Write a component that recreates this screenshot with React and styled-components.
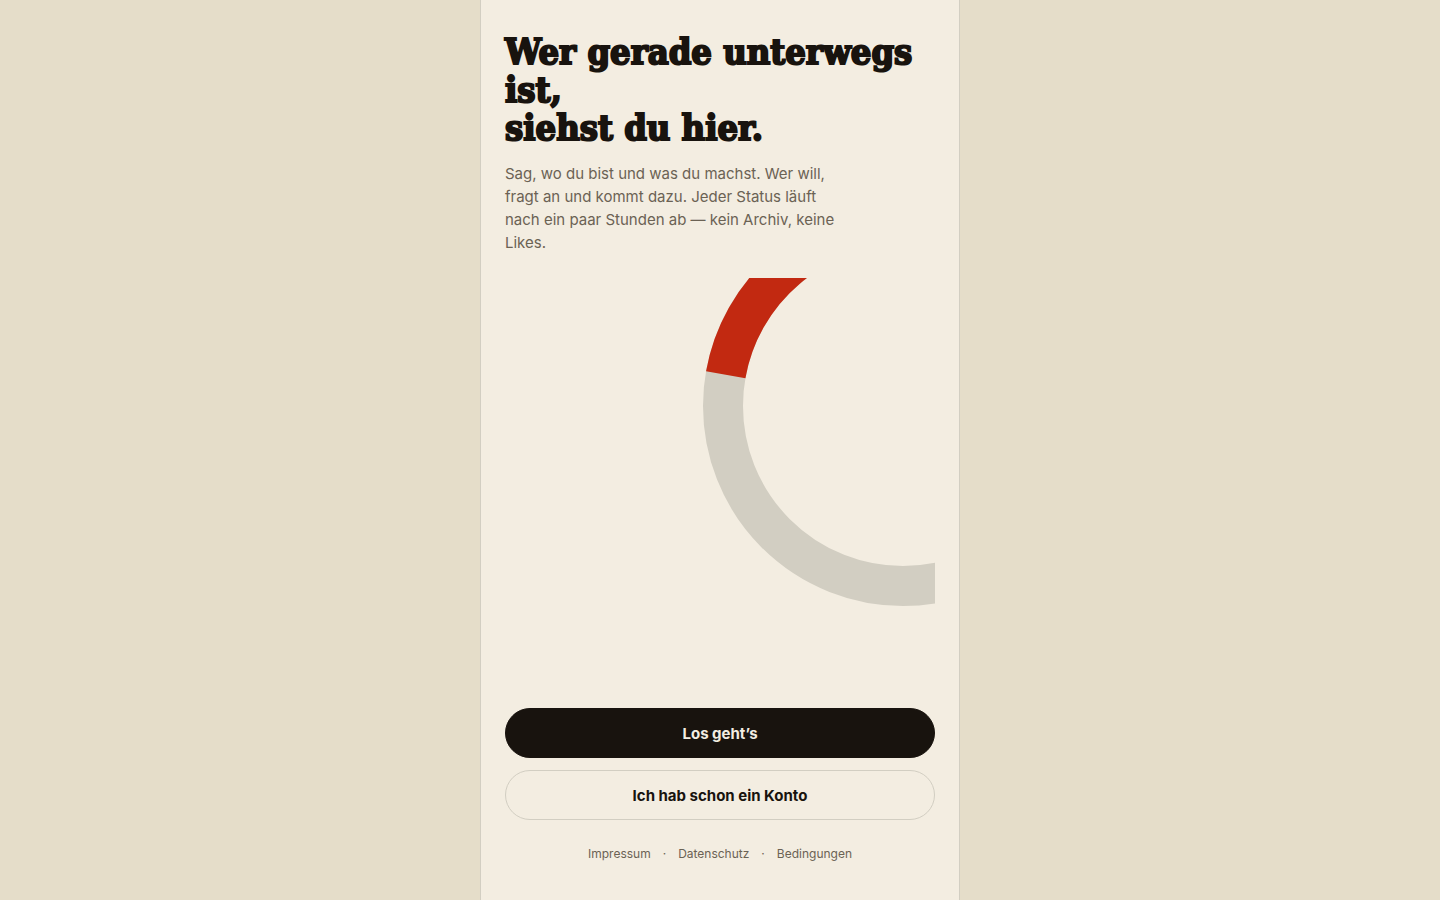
import React from "react"
import styled, { createGlobalStyle, ThemeProvider } from "styled-components"

const theme = {
  backdrop: '#e5ddc9',
  paper: '#f3ede1',
  ink: '#18130e',
  muted: '#6b6254',
  line: '#d2cec2',
  accent: '#c22911',
  display: '"DejaVu Serif Condensed", "DejaVu Serif", serif',
  text: 'Inter, "Open Sans", sans-serif',
}

const RADIUS = 180
const CENTER = 200
const links = ['Impressum', 'Datenschutz', 'Bedingungen']

// degrees run clockwise from twelve o'clock
const pointAt = deg => {
  const rad = (deg - 90) * Math.PI / 180
  return `${CENTER + RADIUS * Math.cos(rad)} ${CENTER + RADIUS * Math.sin(rad)}`
}

const StatusRing = () => (
  <Ring viewBox="0 72 232 328" aria-hidden="true">
    <Track cx={CENTER} cy={CENTER} r={RADIUS} />
    <Remaining d={`M ${pointAt(280)} A ${RADIUS} ${RADIUS} 0 0 1 ${pointAt(360)}`} />
  </Ring>
)

class App extends React.Component {
  render() {
    return (<ThemeProvider theme={theme}>
      <GlobalStyle />
      <Screen>
        <Title>
          Wer gerade unterwegs ist,<br />
          siehst du hier.
        </Title>
        <Intro>
          Sag, wo du bist und was du machst. Wer will, fragt an und kommt
          dazu. Jeder Status läuft nach ein paar Stunden ab — kein Archiv,
          keine Likes.
        </Intro>
        <Stage>
          <StatusRing />
        </Stage>
        <Actions>
          <Button type="button" $primary>Los geht’s</Button>
          <Button type="button">Ich hab schon ein Konto</Button>
        </Actions>
        <Footer>
          {links.map((label, i) => (
            <React.Fragment key={label}>
              {i > 0 && <span>·</span>}
              <FooterLink href={`#${label.toLowerCase()}`}>{label}</FooterLink>
            </React.Fragment>
          ))}
        </Footer>
      </Screen>
    </ThemeProvider>)
  }
}

const GlobalStyle = createGlobalStyle`
  * {
    box-sizing: border-box;
  }
  body {
    margin: 0;
    background: ${props => props.theme.backdrop};
    color: ${props => props.theme.ink};
    font-family: ${props => props.theme.text};
  }
`
const Screen = styled.main`
  display: flex;
  flex-direction: column;
  max-width: 480px;
  min-height: 100vh;
  margin: 0 auto;
  padding: 32px 24px 36px;
  background: ${props => props.theme.paper};
  border: solid ${props => props.theme.line};
  border-width: 0 1px;
`
const Title = styled.h1`
  margin: 0;
  font-family: ${props => props.theme.display};
  font-size: 36px;
  font-weight: 700;
  line-height: 38px;
  -webkit-text-stroke: 2px currentColor;
`
const Intro = styled.p`
  max-width: 340px;
  margin: 16px 0 24px;
  color: ${props => props.theme.muted};
  font-size: 15px;
  line-height: 23px;
`
const Stage = styled.div`
  display: flex;
  flex: 1;
  align-items: flex-start;
  justify-content: flex-end;
  margin-bottom: 24px;
`
const Ring = styled.svg`
  display: block;
  width: 232px;
  height: 328px;
`
const Track = styled.circle`
  fill: none;
  stroke: ${props => props.theme.line};
  stroke-width: 40px;
`
const Remaining = styled.path`
  fill: none;
  stroke: ${props => props.theme.accent};
  stroke-width: 40px;
`
const Actions = styled.div`
  display: flex;
  flex-direction: column;
  gap: 12px;
`
const Button = styled.button`
  height: 50px;
  padding: 0 24px;
  background: ${props => props.$primary ? props.theme.ink : 'transparent'};
  border: 1px solid ${props => props.$primary ? props.theme.ink : props.theme.line};
  border-radius: 25px;
  color: ${props => props.$primary ? props.theme.paper : props.theme.ink};
  cursor: pointer;
  font-family: inherit;
  font-size: 15px;
  font-weight: 700;
`
const Footer = styled.footer`
  display: flex;
  justify-content: center;
  gap: 12px;
  margin-top: 24px;
  color: ${props => props.theme.muted};
  font-size: 12px;
  line-height: 20px;
`
const FooterLink = styled.a`
  color: inherit;
  text-decoration: none;
`

export default App;
